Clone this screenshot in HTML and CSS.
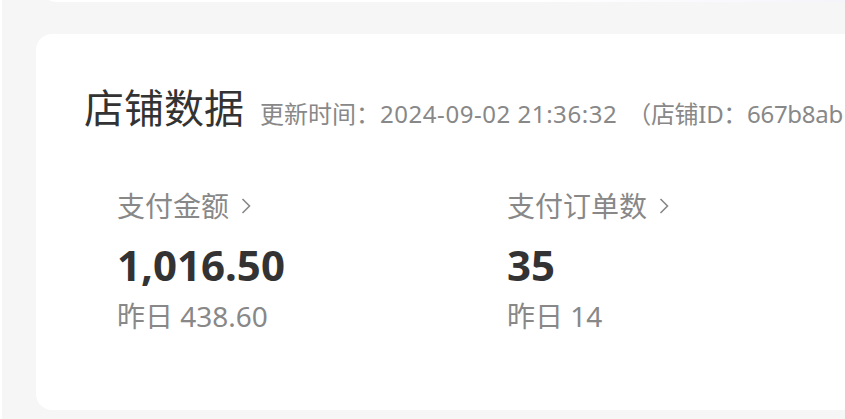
FILE: index.html
```html
<!DOCTYPE html>
<html lang="zh-CN">
<head>
<meta charset="utf-8">
<link rel="stylesheet" href="styles.css">
</head>
<body>
<div class="page">
  <div class="prev-card"></div>
  <section class="card">
    <header class="card-head">
      <h1 class="title">店铺数据</h1>
      <span class="meta">更新时间：<span class="num">2024-09-02 21:36:32</span><span class="shop">（店铺ID：667b8ab</span></span>
    </header>
    <div class="stats">
      <div class="stat">
        <div class="label">支付金额<svg class="chev" viewBox="0 0 10 16" width="10" height="16"><path d="M1.5 1 L8.5 8 L1.5 15" fill="none" stroke="#888" stroke-width="1.6"/></svg></div>
        <div class="value">1,016.50</div>
        <div class="prev">昨日 438.60</div>
      </div>
      <div class="stat">
        <div class="label">支付订单数<svg class="chev" viewBox="0 0 10 16" width="10" height="16"><path d="M1.5 1 L8.5 8 L1.5 15" fill="none" stroke="#888" stroke-width="1.6"/></svg></div>
        <div class="value">35</div>
        <div class="prev">昨日 14</div>
      </div>
    </div>
  </section>
</div>
</body>
</html>
```
FILE: styles.css
```css
html, body {
  margin: 0;
  padding: 0;
  background: #ffffff;
}
body {
  width: 845px;
  height: 419px;
  overflow: hidden;
  font-family: "Noto Sans", "Noto Sans CJK SC", sans-serif;
}
.page {
  margin-left: 2px;
  height: 419px;
  background: #f6f6f6;
  overflow: hidden;
}
.prev-card {
  height: 16px;
  margin-top: -14px;
  margin-left: 40px;
  margin-right: -20px;
  background: linear-gradient(90deg, #ffffff 60%, #f4f3fb 100%);
  border-radius: 0 0 0 14px;
}
.card {
  margin-top: 32px;
  margin-left: 34px;
  margin-right: -40px;
  height: 376px;
  background: #ffffff;
  border-radius: 16px;
  padding: 44px 0 0 48px;
  box-sizing: border-box;
  white-space: nowrap;
}
.card-head {
  display: flex;
  align-items: baseline;
  gap: 16px;
}
.title {
  margin: 0;
  font-family: "Noto Sans CJK SC", sans-serif;
  font-size: 40px;
  font-weight: 400;
  color: #333333;
  line-height: 56px;
}
.meta {
  font-size: 24px;
  color: #888888;
}
.num {
  letter-spacing: 0.55px;
}
.shop {
  margin-left: 10px;
  letter-spacing: -0.3px;
}
.stats {
  display: flex;
  padding-left: 33px;
  margin-top: 54px;
}
.stat {
  width: 390px;
  flex-shrink: 0;
}
.label {
  font-size: 28px;
  color: #888888;
  line-height: 36px;
  display: flex;
  align-items: center;
  gap: 12px;
}
.chev {
  display: block;
}
.value {
  font-size: 42px;
  font-weight: 700;
  color: #333333;
  line-height: 50px;
  margin-top: 16px;
}
.prev {
  font-size: 28px;
  color: #888888;
  line-height: 36px;
  margin-top: 8px;
}
```
